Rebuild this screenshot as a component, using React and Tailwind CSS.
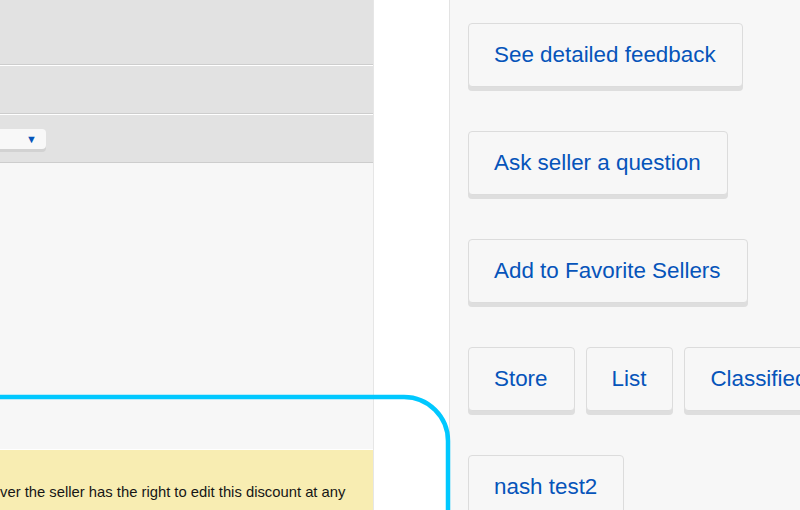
import React from "react";

function Btn({ children }) {
  return (
    <div className="h-[64px] flex items-center pl-[25px] pr-[26px] bg-[#f7f7f7] border border-[#dcdcdc] rounded-[4px] shadow-[0_4px_0_#dedede] text-[#0654ba] text-[22.4px] whitespace-nowrap shrink-0">
      {children}
    </div>
  );
}

export default function App() {
  return (
    <div
      className="relative w-[800px] h-[510px] overflow-hidden flex bg-white"
      style={{ fontFamily: '"Liberation Sans", Arial, sans-serif' }}
    >
      {/* Left column */}
      <div className="w-[374px] shrink-0 flex flex-col border-r border-[#e6e6e6]">
        <div className="h-[64px] bg-[#e2e2e2] shrink-0" />
        <div className="h-px bg-[#cdcdcd] shrink-0" />
        <div className="h-px bg-white shrink-0" />
        <div className="h-[47px] bg-[#e2e2e2] shrink-0" />
        <div className="h-px bg-[#cdcdcd] shrink-0" />
        <div className="h-px bg-white shrink-0" />
        <div className="h-[47px] bg-[#e2e2e2] shrink-0 pt-[14px]">
          <div className="w-[46px] h-[20px] bg-[#f8f8f8] rounded-r-[4px] shadow-[0_3px_0_#d2d2d2] flex items-center justify-end pr-[9px]">
            <span className="text-[#0654ba] text-[11px] leading-none">▼</span>
          </div>
        </div>
        <div className="h-px bg-[#cdcdcd] shrink-0" />
        <div className="h-[286px] bg-[#f7f7f7] shrink-0" />
        <div className="h-px bg-white shrink-0" />
        <div className="flex-1 bg-[#f8edb2] pt-[33px]">
          <p className="text-[14.8px] leading-[18px] text-[#161616] whitespace-nowrap">
            ver the seller has the right to edit this discount at any
          </p>
        </div>
      </div>

      {/* Middle white gutter */}
      <div className="w-[76px] shrink-0 bg-white border-r border-[#e3e3e3]" />

      {/* Right panel */}
      <div className="flex-1 bg-[#f7f7f7] pl-[18px] pt-[23px] flex flex-col gap-[44px] overflow-hidden">
        <div className="flex">
          <Btn>See detailed feedback</Btn>
        </div>
        <div className="flex">
          <Btn>Ask seller a question</Btn>
        </div>
        <div className="flex">
          <Btn>Add to Favorite Sellers</Btn>
        </div>
        <div className="flex gap-[11px]">
          <Btn>Store</Btn>
          <Btn>List</Btn>
          <Btn>Classified Ads</Btn>
        </div>
        <div className="flex">
          <Btn>nash test2</Btn>
        </div>
      </div>

      {/* Cyan highlight outline */}
      <svg
        className="absolute left-0 top-0 pointer-events-none"
        width="800"
        height="510"
        viewBox="0 0 800 510"
      >
        <path
          d="M-10 397 H404 A44 44 0 0 1 448 441 V520"
          fill="none"
          stroke="#00c8ff"
          strokeWidth="4.5"
        />
      </svg>
    </div>
  );
}
